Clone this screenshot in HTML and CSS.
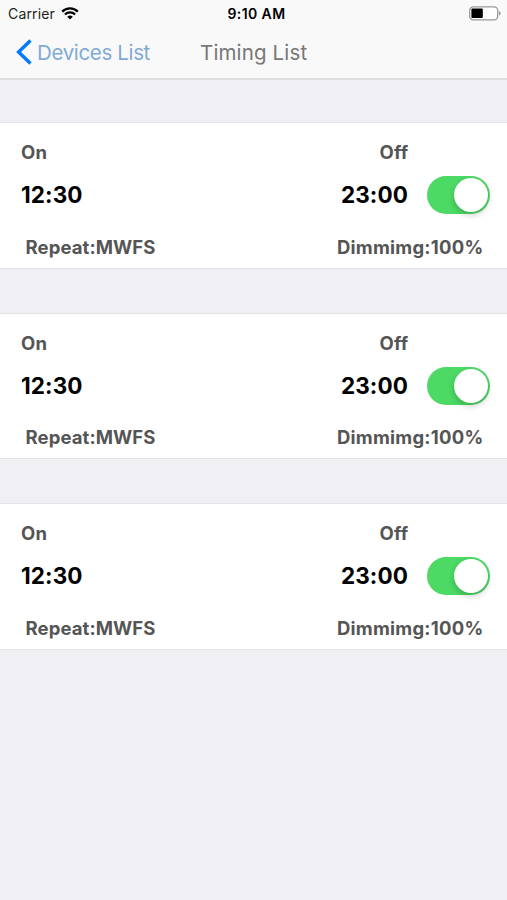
FILE: index.html
```html
<!DOCTYPE html>
<html lang="en">
<head>
    <meta charset="UTF-8">
    <title>Timing List</title>
    <link rel="stylesheet" href="styles.css">
</head>
<body>
<div class="header">
    <div class="status">
        <div class="carrier">
            <span>Carrier</span>
            <svg class="wifi" width="18" height="13" viewBox="0 0 18 13">
                <path d="M1.2 4.6 A11 11 0 0 1 16.8 4.6" fill="none" stroke="#000" stroke-width="2.2"/>
                <path d="M3.9 7.5 A7.2 7.2 0 0 1 14.1 7.5" fill="none" stroke="#000" stroke-width="2.1"/>
                <path d="M9 12.6 L6.2 9.8 A4 4 0 0 1 11.8 9.8 Z"/>
            </svg>
        </div>
        <span class="clock">9:10 AM</span>
        <svg class="battery" width="32" height="15" viewBox="0 0 32 15">
            <rect x="0.7" y="0.8" width="28" height="13" rx="3.6" fill="#fff" stroke="#999" stroke-width="1.3"/>
            <rect x="2.4" y="2.5" width="11.4" height="9.6" rx="1"/>
            <path d="M30 5 Q31.6 5.6 31.6 7.3 Q31.6 9 30 9.6 Z" fill="#999"/>
        </svg>
    </div>
    <div class="nav">
        <a class="back">
            <svg width="16" height="26" viewBox="0 0 16 26">
                <path d="M14.5 1.5 L2.6 13 L14.5 24.5" fill="none" stroke="#007aff" stroke-width="3.4"/>
            </svg>
            <span>Devices List</span>
        </a>
        <span class="title">Timing List</span>
    </div>
</div>
<ul class="list">
    <li class="card">
        <div class="labels"><span>On</span><span>Off</span></div>
        <div class="times">
            <span>12:30</span>
            <span class="off">23:00</span>
            <div class="switch"><i class="knob"></i></div>
        </div>
        <div class="info"><span>Repeat:MWFS</span><span class="dim">Dimmimg:100%</span></div>
    </li>
    <li class="card">
        <div class="labels"><span>On</span><span>Off</span></div>
        <div class="times">
            <span>12:30</span>
            <span class="off">23:00</span>
            <div class="switch"><i class="knob"></i></div>
        </div>
        <div class="info"><span>Repeat:MWFS</span><span class="dim">Dimmimg:100%</span></div>
    </li>
    <li class="card">
        <div class="labels"><span>On</span><span>Off</span></div>
        <div class="times">
            <span>12:30</span>
            <span class="off">23:00</span>
            <div class="switch"><i class="knob"></i></div>
        </div>
        <div class="info"><span>Repeat:MWFS</span><span class="dim">Dimmimg:100%</span></div>
    </li>
</ul>
</body>
</html>
```

FILE: styles.css
```css
* {
    margin: 0;
    padding: 0;
    box-sizing: border-box;
    list-style: none;
}

body {
    height: 900px;
    background: #efeff4;
    font-family: Inter, "Liberation Sans", sans-serif;
    overflow: hidden;
}

.header {
    height: 80px;
    background: #f9f9f9;
    border-bottom: 2px solid #dedee0;
}

.status {
    display: grid;
    grid-template-columns: 1fr auto 1fr;
    align-items: center;
    height: 27px;
    padding: 0 6px 0 8px;
    font-size: 14px;
}

.carrier {
    display: flex;
    align-items: center;
    gap: 6px;
    color: #222;
    letter-spacing: 0.15px;
}

.clock {
    padding-left: 4px;
    font-weight: 600;
    letter-spacing: 0.4px;
}

.battery {
    justify-self: end;
}

.nav {
    display: flex;
    align-items: center;
    height: 50px;
    padding-left: 16px;
    font-size: 20.5px;
}

.back {
    display: flex;
    align-items: center;
    gap: 5px;
    width: 184px;
    color: #7faad6;
    letter-spacing: -0.35px;
}

.title {
    color: #777;
    letter-spacing: 0.15px;
}

.list {
    display: flex;
    flex-direction: column;
    gap: 44px;
    padding-top: 42px;
}

.card {
    height: 146.5px;
    padding-top: 18px;
    background: #fff;
    border-top: 1px solid #e4e4e8;
    border-bottom: 1px solid #e4e4e8;
    color: #555;
    font-size: 18.5px;
    font-weight: 700;
    line-height: 22px;
    letter-spacing: 0.1px;
}

.labels {
    display: flex;
    justify-content: space-between;
    padding: 0 98.5px 0 21px;
    letter-spacing: 0.3px;
}

.times {
    display: flex;
    align-items: center;
    height: 38px;
    margin-top: 13px;
    padding: 0 17px 0 21px;
    color: #000;
    font-size: 22.5px;
    letter-spacing: 0.1px;
}

.off {
    margin-left: auto;
}

.switch {
    display: flex;
    justify-content: flex-end;
    align-items: center;
    width: 63px;
    height: 38px;
    margin-left: 19px;
    padding-right: 2px;
    border-radius: 19px;
    background: #4cd964;
}

.knob {
    width: 34px;
    height: 34px;
    border-radius: 50%;
    background: #fff;
    box-shadow: 0 3px 6px rgba(0, 0, 0, 0.2);
}

.info {
    display: flex;
    justify-content: space-between;
    margin-top: 21.5px;
    padding: 0 23.5px 0 25.5px;
}

.dim {
    letter-spacing: 0.25px;
}
```
